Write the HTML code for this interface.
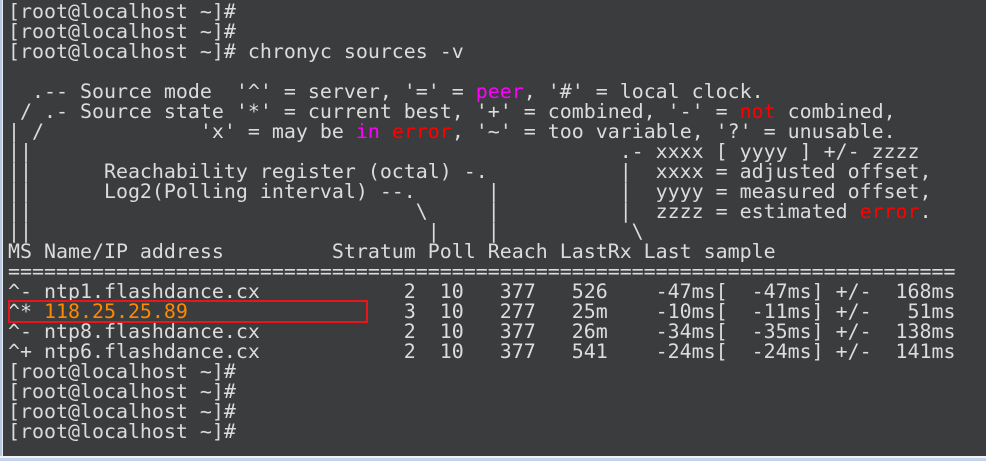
<!DOCTYPE html>
<html><head><meta charset="utf-8"><style>
html,body{margin:0;padding:0;width:986px;height:461px;overflow:hidden;background:#3b3c3e;}
.lb{position:absolute;left:0;top:0;width:2px;height:461px;background:#b9c9e0;}
.lb2{position:absolute;left:2px;top:0;width:1px;height:461px;background:#e8eef6;}
.bb{position:absolute;left:0;top:456px;width:986px;height:2px;background:#f0f2f5;}
.bb2{position:absolute;left:0;top:458px;width:986px;height:3px;background:#c3d3e9;}
pre{position:absolute;left:8px;top:2px;margin:0;font-family:"DejaVu Sans Mono","Liberation Mono",monospace;font-size:19.93px;line-height:20px;color:#dcdcdc;}
.m{color:#ff00ff}.r{color:#ff0000}.o{color:#ff8a00}
.box{position:absolute;left:8px;top:300px;width:356px;height:19px;border:2px solid #e8151b;}
</style></head><body>
<div class="lb"></div><div class="lb2"></div>
<pre>[root@localhost ~]#
[root@localhost ~]#
[root@localhost ~]# chronyc sources -v

  .-- Source mode  '^' = server, '=' = <span class="m">peer</span>, '#' = local clock.
 / .- Source state '*' = current best, '+' = combined, '-' = <span class="r">not</span> combined,
| /             'x' = may be <span class="m">in</span> <span class="r">error</span>, '~' = too variable, '?' = unusable.
||                                                 .- xxxx [ yyyy ] +/- zzzz
||      Reachability register (octal) -.           |  xxxx = adjusted offset,
||      Log2(Polling interval) --.      |          |  yyyy = measured offset,
||                                \     |          |  zzzz = estimated <span class="r">error</span>.
||                                 |    |           \
MS Name/IP address         Stratum Poll Reach LastRx Last sample
===============================================================================
^- ntp1.flashdance.cx            2  10   377   526    -47ms[  -47ms] +/-  168ms
^* <span class="o">118.25.25.89</span>                  3  10   277   25m    -10ms[  -11ms] +/-   51ms
^- ntp8.flashdance.cx            2  10   377   26m    -34ms[  -35ms] +/-  138ms
^+ ntp6.flashdance.cx            2  10   377   541    -24ms[  -24ms] +/-  141ms
[root@localhost ~]#
[root@localhost ~]#
[root@localhost ~]#
[root@localhost ~]#</pre>
<div class="box"></div>
<div class="bb"></div><div class="bb2"></div>
</body></html>
